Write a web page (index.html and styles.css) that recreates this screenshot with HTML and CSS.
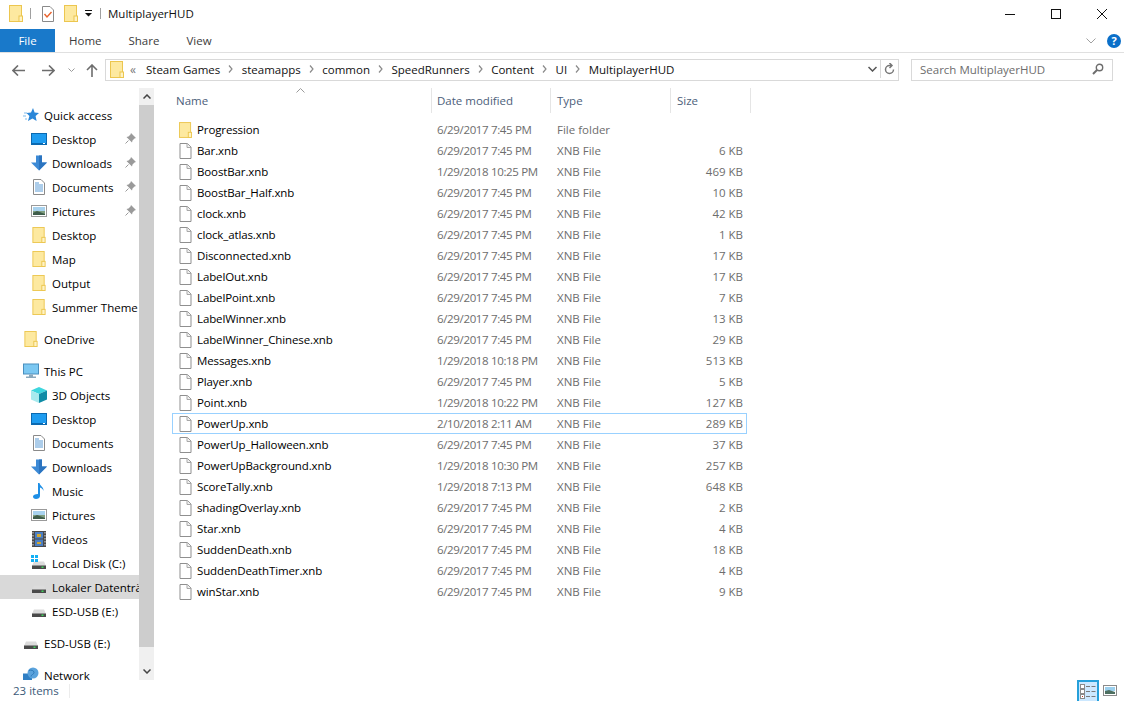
FILE: index.html
```html
<!DOCTYPE html>
<html lang="en">
<head>
	<meta charset="UTF-8">
	<title>MultiplayerHUD</title>
	<link rel="stylesheet" href="styles.css">
</head>
<body>
	<svg class="defs" width="0" height="0">
		<symbol id="folder" viewBox="0 0 14 17">
			<rect x="0.5" y="0.5" width="12" height="16" fill="#fde9a0" stroke="#ecc64f"/>
			<rect x="10" y="11" width="3.5" height="5.5" fill="#fff3c4" stroke="#ecc64f"/>
		</symbol>
		<symbol id="file" viewBox="0 0 12 16">
			<path d="M.5.5H8L11.5 4V15.5H.5Z" fill="#fff" stroke="#8f8f8f"/>
			<path d="M7.5.5V4.5H11.5" fill="#f0f0f0" stroke="#a8a8a8"/>
		</symbol>
		<symbol id="star" viewBox="0 0 16 16">
			<path d="M10 1l1.6 4.4L16 6l-3.4 3 1 5-4.100-2.500L5 14l1.400-5L3.500 6l4.500-.5Z" fill="#2b87d8"/>
			<path d="M0 9h3M1 6h3M2 12h2" stroke="#7db9ea" fill="none"/>
		</symbol>
		<symbol id="desktop" viewBox="0 0 16 12">
			<rect x="0.500" y="0.500" width="15" height="11" fill="#1e9cf0" stroke="#0b69b0"/>
			<path d="M1 10.500h14" stroke="#0b69b0"/>
			<path d="M12 10.500h2" stroke="#fff"/>
		</symbol>
		<symbol id="down" viewBox="0 0 16 15">
			<path d="M5 0h6v7h5l-8 8-8-8h5Z" fill="#3c8ad6"/>
			<path d="M8 0h3v7h5l-8 8Z" fill="#2b74c0"/>
		</symbol>
		<symbol id="doc" viewBox="0 0 12 16">
			<path d="M.5.5H8L11.500 4V15.500H.5Z" fill="#fff" stroke="#8a8a8a"/>
			<path d="M2 4h4M2 6h8M2 8h8M2 10h8M2 12h8" stroke="#5b9bd5"/>
		</symbol>
		<symbol id="pic" viewBox="0 0 16 12">
			<rect x="0.500" y="0.500" width="15" height="11" fill="#fff" stroke="#9a9a9a"/>
			<rect x="2" y="2" width="12" height="4" fill="#a8d2ee"/>
			<rect x="2" y="6" width="12" height="4" fill="#7f9e80"/>
			<path d="M2 8l4-2 8 3v1H2Z" fill="#3f5d4b"/>
		</symbol>
		<symbol id="pin" viewBox="0 0 11 11">
			<path d="M6 0l5 5-1.500.5L7.500 7.500 7 9.500 1.500 4l2-.5 2-2Z" fill="#9a9a9a"/>
			<path d="M3.500 7.500L.5 10.500" stroke="#9a9a9a" fill="none"/>
		</symbol>
		<symbol id="pc" viewBox="0 0 16 15">
			<rect x="0.500" y="0.500" width="15" height="10" fill="#7cc8f2" stroke="#4a8fbe"/>
			<path d="M6 11h4v2H6ZM3 13h10v1.500H3Z" fill="#8aa8bc"/>
		</symbol>
		<symbol id="cube" viewBox="0 0 16 16">
			<path d="M8 0l8 3.500L8 7 0 3.500Z" fill="#3ed6de"/>
			<path d="M0 3.500L8 7v9l-8-3.500Z" fill="#a8eaee"/>
			<path d="M16 3.500L8 7v9l8-3.500Z" fill="#0f8ca6"/>
		</symbol>
		<symbol id="note" viewBox="0 0 12 16">
			<path d="M5 0h1.500c.5 3 4.500 4 4 8-.5-2-2-3-3.500-3.500V13c0 2-2 3-4 3s-3-1-3-2.500S2 11 5 11Z" fill="#1e8fe6"/>
		</symbol>
		<symbol id="film" viewBox="0 0 14 16">
			<rect width="14" height="16" fill="#4a4a4a"/>
			<path d="M1 1v14M13 1v14" stroke="#ddd" stroke-dasharray="1.500 1.500" fill="none"/>
			<rect x="3" y="1" width="8" height="6.500" fill="#4b7fc4"/>
			<rect x="3" y="8.500" width="8" height="6.500" fill="#4b7fc4"/>
			<path d="M5 3h4v3H5ZM5 11h4v2H5Z" fill="#d3a82f"/>
		</symbol>
		<symbol id="drive" viewBox="0 0 14 8">
			<path d="M2 .5h10L14 5H0Z" fill="#dcdcdc"/>
			<rect y="4.500" width="14" height="3.500" fill="#4a4a4a"/>
			<rect x="9.500" y="5.500" width="2" height="1.500" fill="#3fd35a"/>
		</symbol>
		<symbol id="win" viewBox="0 0 7 7">
			<path d="M0 0h3v3H0ZM4 0h3v3H4ZM0 4h3v3H0ZM4 4h3v3H4Z" fill="#12b0f5"/>
		</symbol>
		<symbol id="net" viewBox="0 0 16 15">
			<rect x="0" y="6" width="9" height="7" fill="#2f7fc4"/>
			<circle cx="10" cy="5.500" r="5.500" fill="#5aa2dc"/>
			<path d="M6 3c2-1 5 0 5 2s-3 2-3 4" stroke="#2d78b8" fill="none"/>
		</symbol>
		<symbol id="sep" viewBox="0 0 5 8">
			<path d="M1 .5L4 4 1 7.500" stroke="#8a8a8a" stroke-width="1.200" fill="none"/>
		</symbol>
	</svg>

	<header class="titlebar">
		<svg class="ic-folder-sm tb-first"><use href="#folder"/></svg>
		<span class="tb-line"></span>
		<svg class="tb-check" viewBox="0 0 12 16">
			<path d="M.5.5H8L11.500 4V15.500H.5Z" fill="#fff" stroke="#8a8a8a"/>
			<path d="M2.500 8l2.500 3 4.500-5" stroke="#e8622c" stroke-width="1.400" fill="none"/>
		</svg>
		<svg class="ic-folder-sm tb-folder"><use href="#folder"/></svg>
		<svg class="tb-drop" viewBox="0 0 7 7"><path d="M0 0h7v1H0ZM0 3h7L3.500 6.500Z" fill="#111"/></svg>
		<span class="tb-line tb-line2"></span>
		<span class="tb-title">MultiplayerHUD</span>
		<div class="winbtns">
			<svg class="winbtn" viewBox="0 0 10 10"><path d="M0 5.500h10" stroke="#111" fill="none"/></svg>
			<svg class="winbtn" viewBox="0 0 10 10"><rect x="0.500" y="0.500" width="9" height="9" stroke="#111" fill="none"/></svg>
			<svg class="winbtn" viewBox="0 0 10 10"><path d="M0 0l10 10M10 0L0 10" stroke="#111" fill="none"/></svg>
		</div>
	</header>

	<nav class="ribbon">
		<span class="tab tab-file">File</span>
		<span class="tab tab-home">Home</span>
		<span class="tab tab-share">Share</span>
		<span class="tab tab-view">View</span>
		<svg class="rb-chevron" viewBox="0 0 10 6"><path d="M.5.5L5 5 9.500.5" stroke="#a0a0a0" fill="none"/></svg>
		<span class="rb-help">?</span>
	</nav>

	<section class="addressrow">
		<svg class="arrow arrow-back" viewBox="0 0 13 11"><path d="M6 .5L1 5.500l5 5M1 5.500h12" stroke="#6d6d6d" stroke-width="1.600" fill="none"/></svg>
		<svg class="arrow arrow-fwd" viewBox="0 0 13 11"><path d="M7 .5l5 5-5 5M12 5.500H0" stroke="#6d6d6d" stroke-width="1.600" fill="none"/></svg>
		<svg class="arrow-recent" viewBox="0 0 7 4"><path d="M.5.5L3.500 3.500 6.500.5" stroke="#9a9a9a" fill="none"/></svg>
		<svg class="arrow arrow-up" viewBox="0 0 11 13"><path d="M.5 6l5-5 5 5M5.500 1v12" stroke="#6d6d6d" stroke-width="1.600" fill="none"/></svg>
		<div class="addressbox">
			<svg class="ic-folder-sm"><use href="#folder"/></svg>
			<span class="crumb-more">«</span>
			<span class="crumb">Steam Games</span><svg class="crumb-sep"><use href="#sep"/></svg>
			<span class="crumb">steamapps</span><svg class="crumb-sep"><use href="#sep"/></svg>
			<span class="crumb">common</span><svg class="crumb-sep"><use href="#sep"/></svg>
			<span class="crumb">SpeedRunners</span><svg class="crumb-sep"><use href="#sep"/></svg>
			<span class="crumb">Content</span><svg class="crumb-sep"><use href="#sep"/></svg>
			<span class="crumb">UI</span><svg class="crumb-sep"><use href="#sep"/></svg>
			<span class="crumb">MultiplayerHUD</span>
			<svg class="addr-drop" viewBox="0 0 9 6"><path d="M.5 1L4.500 5 8.500 1" stroke="#555" stroke-width="1.500" fill="none"/></svg>
			<span class="addr-refresh">
				<svg viewBox="0 0 11 12"><path d="M9.500 6.500A4 4 0 1 1 5.500 2.500H7M5.500 0l2.500 2.500L5.500 5" stroke="#777" stroke-width="1.500" fill="none"/></svg>
			</span>
		</div>
		<div class="searchbox">
			<span>Search MultiplayerHUD</span>
			<svg viewBox="0 0 12 12"><circle cx="7.500" cy="4.500" r="3.200" stroke="#6d6d6d" stroke-width="1.400" fill="none"/><path d="M5 7l-4 4" stroke="#6d6d6d" stroke-width="2" fill="none"/></svg>
		</div>
	</section>

	<main class="panes">
		<aside class="sidebar">
			<div class="navlist">
				<div class="navitem lv1 first"><svg class="ni"><use href="#star"/></svg>Quick access</div>
				<div class="navitem"><svg class="ni ni-wide"><use href="#desktop"/></svg>Desktop<svg class="pin"><use href="#pin"/></svg></div>
				<div class="navitem"><svg class="ni"><use href="#down"/></svg>Downloads<svg class="pin"><use href="#pin"/></svg></div>
				<div class="navitem"><svg class="ni"><use href="#doc"/></svg>Documents<svg class="pin"><use href="#pin"/></svg></div>
				<div class="navitem"><svg class="ni ni-wide"><use href="#pic"/></svg>Pictures<svg class="pin"><use href="#pin"/></svg></div>
				<div class="navitem"><svg class="ni"><use href="#folder"/></svg>Desktop</div>
				<div class="navitem"><svg class="ni"><use href="#folder"/></svg>Map</div>
				<div class="navitem"><svg class="ni"><use href="#folder"/></svg>Output</div>
				<div class="navitem"><svg class="ni"><use href="#folder"/></svg>Summer Theme</div>
				<div class="navitem lv1 gap"><svg class="ni"><use href="#folder"/></svg>OneDrive</div>
				<div class="navitem lv1 gap"><svg class="ni"><use href="#pc"/></svg>This PC</div>
				<div class="navitem"><svg class="ni"><use href="#cube"/></svg>3D Objects</div>
				<div class="navitem"><svg class="ni ni-wide"><use href="#desktop"/></svg>Desktop</div>
				<div class="navitem"><svg class="ni"><use href="#doc"/></svg>Documents</div>
				<div class="navitem"><svg class="ni"><use href="#down"/></svg>Downloads</div>
				<div class="navitem"><svg class="ni"><use href="#note"/></svg>Music</div>
				<div class="navitem"><svg class="ni ni-wide"><use href="#pic"/></svg>Pictures</div>
				<div class="navitem"><svg class="ni"><use href="#film"/></svg>Videos</div>
				<div class="navitem"><span class="ni-drive"><svg class="ni-win"><use href="#win"/></svg><svg class="ni-disk"><use href="#drive"/></svg></span>Local Disk (C:)</div>
				<div class="navitem active"><span class="ni-drive"><svg class="ni-disk"><use href="#drive"/></svg></span>Lokaler Datenträger (D:)</div>
				<div class="navitem"><span class="ni-drive"><svg class="ni-disk"><use href="#drive"/></svg></span>ESD-USB (E:)</div>
				<div class="navitem lv1 gap"><span class="ni-drive"><svg class="ni-disk"><use href="#drive"/></svg></span>ESD-USB (E:)</div>
				<div class="navitem lv1 gap"><svg class="ni"><use href="#net"/></svg>Network</div>
			</div>
			<div class="scrollbar">
				<span class="sb-btn"><svg viewBox="0 0 8 5"><path d="M.5 4.500L4 1l3.500 3.500" stroke="#444" stroke-width="1.500" fill="none"/></svg></span>
				<span class="sb-thumb"></span>
				<span class="sb-btn sb-btn-end"><svg viewBox="0 0 8 5"><path d="M.5.5L4 4 7.500.5" stroke="#444" stroke-width="1.500" fill="none"/></svg></span>
			</div>
		</aside>

		<section class="files">
			<div class="colhead">
				<span class="ch ch-name">Name<svg class="sortcaret" viewBox="0 0 9 5"><path d="M.5 4.500L4.500.5l4 4" stroke="#9a9a9a" fill="none"/></svg></span>
				<span class="ch ch-date">Date modified</span>
				<span class="ch ch-type">Type</span>
				<span class="ch ch-size">Size</span>
			</div>
			<div class="rows">
				<div class="row"><span class="nm"><svg class="fi"><use href="#folder"/></svg>Progression</span><span class="dt">6/29/2017 7:45 PM</span><span>File folder</span><span class="sz"></span></div>
				<div class="row"><span class="nm"><svg class="fi"><use href="#file"/></svg>Bar.xnb</span><span class="dt">6/29/2017 7:45 PM</span><span>XNB File</span><span class="sz">6 KB</span></div>
				<div class="row"><span class="nm"><svg class="fi"><use href="#file"/></svg>BoostBar.xnb</span><span class="dt">1/29/2018 10:25 PM</span><span>XNB File</span><span class="sz">469 KB</span></div>
				<div class="row"><span class="nm"><svg class="fi"><use href="#file"/></svg>BoostBar_Half.xnb</span><span class="dt">6/29/2017 7:45 PM</span><span>XNB File</span><span class="sz">10 KB</span></div>
				<div class="row"><span class="nm"><svg class="fi"><use href="#file"/></svg>clock.xnb</span><span class="dt">6/29/2017 7:45 PM</span><span>XNB File</span><span class="sz">42 KB</span></div>
				<div class="row"><span class="nm"><svg class="fi"><use href="#file"/></svg>clock_atlas.xnb</span><span class="dt">6/29/2017 7:45 PM</span><span>XNB File</span><span class="sz">1 KB</span></div>
				<div class="row"><span class="nm"><svg class="fi"><use href="#file"/></svg>Disconnected.xnb</span><span class="dt">6/29/2017 7:45 PM</span><span>XNB File</span><span class="sz">17 KB</span></div>
				<div class="row"><span class="nm"><svg class="fi"><use href="#file"/></svg>LabelOut.xnb</span><span class="dt">6/29/2017 7:45 PM</span><span>XNB File</span><span class="sz">17 KB</span></div>
				<div class="row"><span class="nm"><svg class="fi"><use href="#file"/></svg>LabelPoint.xnb</span><span class="dt">6/29/2017 7:45 PM</span><span>XNB File</span><span class="sz">7 KB</span></div>
				<div class="row"><span class="nm"><svg class="fi"><use href="#file"/></svg>LabelWinner.xnb</span><span class="dt">6/29/2017 7:45 PM</span><span>XNB File</span><span class="sz">13 KB</span></div>
				<div class="row"><span class="nm"><svg class="fi"><use href="#file"/></svg>LabelWinner_Chinese.xnb</span><span class="dt">6/29/2017 7:45 PM</span><span>XNB File</span><span class="sz">29 KB</span></div>
				<div class="row"><span class="nm"><svg class="fi"><use href="#file"/></svg>Messages.xnb</span><span class="dt">1/29/2018 10:18 PM</span><span>XNB File</span><span class="sz">513 KB</span></div>
				<div class="row"><span class="nm"><svg class="fi"><use href="#file"/></svg>Player.xnb</span><span class="dt">6/29/2017 7:45 PM</span><span>XNB File</span><span class="sz">5 KB</span></div>
				<div class="row"><span class="nm"><svg class="fi"><use href="#file"/></svg>Point.xnb</span><span class="dt">1/29/2018 10:22 PM</span><span>XNB File</span><span class="sz">127 KB</span></div>
				<div class="row focused"><span class="nm"><svg class="fi"><use href="#file"/></svg>PowerUp.xnb</span><span class="dt">2/10/2018 2:11 AM</span><span>XNB File</span><span class="sz">289 KB</span></div>
				<div class="row"><span class="nm"><svg class="fi"><use href="#file"/></svg>PowerUp_Halloween.xnb</span><span class="dt">6/29/2017 7:45 PM</span><span>XNB File</span><span class="sz">37 KB</span></div>
				<div class="row"><span class="nm"><svg class="fi"><use href="#file"/></svg>PowerUpBackground.xnb</span><span class="dt">1/29/2018 10:30 PM</span><span>XNB File</span><span class="sz">257 KB</span></div>
				<div class="row"><span class="nm"><svg class="fi"><use href="#file"/></svg>ScoreTally.xnb</span><span class="dt">1/29/2018 7:13 PM</span><span>XNB File</span><span class="sz">648 KB</span></div>
				<div class="row"><span class="nm"><svg class="fi"><use href="#file"/></svg>shadingOverlay.xnb</span><span class="dt">6/29/2017 7:45 PM</span><span>XNB File</span><span class="sz">2 KB</span></div>
				<div class="row"><span class="nm"><svg class="fi"><use href="#file"/></svg>Star.xnb</span><span class="dt">6/29/2017 7:45 PM</span><span>XNB File</span><span class="sz">4 KB</span></div>
				<div class="row"><span class="nm"><svg class="fi"><use href="#file"/></svg>SuddenDeath.xnb</span><span class="dt">6/29/2017 7:45 PM</span><span>XNB File</span><span class="sz">18 KB</span></div>
				<div class="row"><span class="nm"><svg class="fi"><use href="#file"/></svg>SuddenDeathTimer.xnb</span><span class="dt">6/29/2017 7:45 PM</span><span>XNB File</span><span class="sz">4 KB</span></div>
				<div class="row"><span class="nm"><svg class="fi"><use href="#file"/></svg>winStar.xnb</span><span class="dt">6/29/2017 7:45 PM</span><span>XNB File</span><span class="sz">9 KB</span></div>
			</div>
		</section>
	</main>

	<footer class="statusbar">
		<span class="items">23 items</span>
		<span class="st-line"></span>
		<span class="viewbtn">
			<svg viewBox="0 0 16 16">
				<rect x="0.500" y="0.500" width="4" height="4" fill="#fff" stroke="#8a8a8a"/>
				<rect x="0.500" y="5.500" width="4" height="4" fill="#fff" stroke="#8a8a8a"/>
				<rect x="0.500" y="10.500" width="4" height="4" fill="#fff" stroke="#8a8a8a"/>
				<path d="M2 12h1v1H2Z" fill="#c0392b"/>
				<path d="M6 2.500h4M11.500 2.500h4M6 7.500h4M11.500 7.500h4M6 12.500h4M11.500 12.500h4" stroke="#7a7a7a"/>
			</svg>
		</span>
		<svg class="viewthumb" viewBox="0 0 14 11">
			<rect x="0.500" y="0.500" width="13" height="10" fill="#fff" stroke="#8a8a8a"/>
			<rect x="2" y="2" width="10" height="4" fill="#9cd0ee"/>
			<path d="M2 6l4-1 6 2v2H2Z" fill="#4d6f60"/>
		</svg>
	</footer>
</body>
</html>
```

FILE: styles.css
```css
* {margin:0;padding:0;box-sizing:border-box;}
html, body {height:100%;overflow:hidden;}
body {display:flex;flex-flow:column nowrap;background-color:#fff;color:#000;font-family:"Open Sans","Noto Sans","Liberation Sans",sans-serif;font-size:11.5px;}
svg {display:block;flex:0 0 auto;}
.defs {position:absolute;}
.ic-folder-sm {width:14px;height:17px;}

.titlebar {flex:0 0 29px;display:flex;align-items:center;padding-bottom:2px;}
.tb-first {margin-left:9px;}
.tb-line {width:1px;height:11px;background-color:#a0a0a0;margin-left:7px;}
.tb-check {width:12px;height:16px;margin-left:11px;}
.tb-folder {margin-left:10px;}
.tb-drop {width:7px;height:7px;margin-left:7px;}
.tb-line2 {margin-left:8px;}
.tb-title {margin-left:7px;color:#111;}
.winbtns {margin-left:auto;display:flex;gap:36px;margin-right:17px;}
.winbtn {width:10px;height:10px;}

.ribbon {flex:0 0 24px;display:flex;align-items:center;border-bottom:1px solid #e0e0e0;color:#3c3c3c;}
.tab {display:block;}
.tab-file {width:55px;height:23px;line-height:23px;background-color:#1979ca;color:#fff;text-align:center;}
.tab-home {margin-left:14px;}
.tab-share {margin-left:27px;}
.tab-view {margin-left:27px;}
.rb-chevron {width:10px;height:6px;margin-left:auto;}
.rb-help {width:14px;height:14px;border-radius:50%;background-color:#0a6fc9;color:#fff;font-weight:bold;font-size:11px;line-height:14px;text-align:center;margin-left:11px;margin-right:3px;}

.addressrow {flex:0 0 35px;display:flex;align-items:center;padding-left:12px;padding-bottom:1px;}
.arrow-back, .arrow-fwd {width:13px;height:11px;}
.arrow-fwd {margin-left:17px;}
.arrow-recent {width:7px;height:4px;margin-left:13px;}
.arrow-up {width:12px;height:13px;margin-left:11px;}
.addressbox {width:794px;height:22px;margin-left:7px;border:1px solid #d9d9d9;display:flex;align-items:center;padding-left:4px;padding-bottom:2px;color:#111;}
.crumb-more {width:16px;margin-left:6px;color:#777;font-size:12px;}
.crumb-sep {width:5px;height:8px;margin:0 8.500px 0 8px;}
.addr-drop {width:9px;height:6px;margin-left:auto;margin-right:3px;}
.addr-refresh {width:18px;height:18px;border-left:1px solid #d9d9d9;display:flex;align-items:center;justify-content:center;}
.addr-refresh svg {width:11px;height:12px;}
.searchbox {width:202px;height:22px;margin-left:12px;border:1px solid #d9d9d9;display:flex;align-items:center;justify-content:space-between;padding:0 8px 2px;color:#6d6d6d;}
.searchbox svg {width:12px;height:12px;}

.panes {flex:1 1 0;min-height:0;display:flex;}
.sidebar {flex:0 0 155px;display:flex;overflow:hidden;}
.navlist {flex:0 0 139px;overflow:hidden;}
.navitem {height:24px;display:flex;align-items:center;padding-left:31px;white-space:nowrap;gap:5px;position:relative;overflow:hidden;}
.navitem.first {margin-top:15px;}
.navitem.lv1 {padding-left:23px;}
.navitem.gap {margin-top:8px;}
.navitem.active {background-color:#d9d9d9;}
.ni {width:16px;height:16px;}
.ni-wide {height:12px;}
.ni-drive {flex:0 0 16px;height:16px;display:flex;flex-flow:column nowrap;justify-content:flex-end;position:relative;}
.ni-disk {width:14px;height:8px;margin:0 0 2px 1px;}
.ni-win {position:absolute;left:0;top:0;width:7px;height:7px;}
.pin {position:absolute;left:125px;top:6px;width:11px;height:11px;}

.scrollbar {flex:0 0 15px;display:flex;flex-flow:column nowrap;background-color:#f0f0f0;}
.sb-btn {flex:0 0 17px;display:flex;align-items:center;justify-content:center;}
.sb-btn svg {width:8px;height:5px;}
.sb-thumb {flex:0 0 542px;background-color:#cdcdcd;}
.sb-btn-end {margin-top:auto;}

.files {flex:1 1 0;display:flex;flex-flow:column nowrap;padding-left:16px;}
.colhead {flex:0 0 25px;display:flex;color:#4c607a;}
.ch {display:flex;align-items:center;border-right:1px solid #e5e5e5;padding-left:5px;position:relative;}
.ch-name {width:261px;}
.ch-date {width:119px;}
.ch-type {width:120px;padding-left:6px;}
.ch-size {width:80px;padding-left:6px;}
.sortcaret {position:absolute;left:125px;top:0;width:9px;height:5px;}

.rows {padding:6px 0 0 1px;}
.row {width:575px;height:21px;display:grid;grid-template-columns:258px 120px 120px 66px;align-items:center;padding-left:6px;border:1px solid transparent;color:#6d6d6d;white-space:nowrap;}
.row.focused {border-color:#99d1ff;}
.nm {display:flex;align-items:center;color:#000;letter-spacing:-.12px;}
.dt {letter-spacing:-.35px;}
.fi {width:13px;height:16px;margin-right:5px;}
.sz {text-align:right;}

.statusbar {flex:0 0 21px;display:flex;align-items:center;padding-left:13px;color:#3c5a78;}
.st-line {width:1px;height:14px;background-color:#ececec;margin-left:10px;}
.viewbtn {margin-left:auto;width:22px;height:21px;background-color:#cce8ff;border:2px solid #26a0da;border-bottom:0;display:flex;align-items:center;justify-content:center;}
.viewbtn svg {width:16px;height:16px;}
.viewthumb {width:14px;height:11px;margin:0 7px 0 4px;}
```
